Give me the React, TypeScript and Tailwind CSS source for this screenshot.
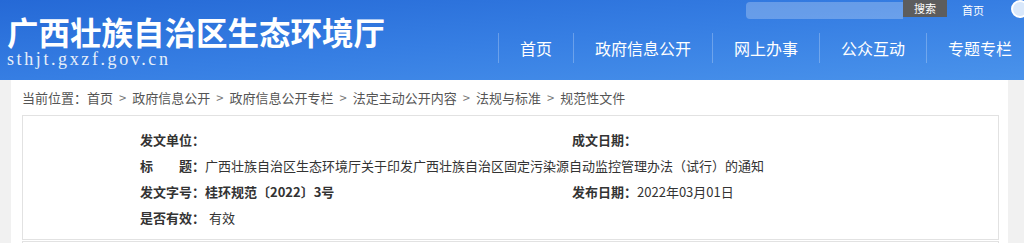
import React from "react";

const CJK = { fontFamily: '"Noto Sans CJK SC", "Noto Sans", sans-serif' };

const NAV = ["首页", "政府信息公开", "网上办事", "公众互动", "专题专栏"];

const CRUMBS = ["首页", "政府信息公开", "政府信息公开专栏", "法定主动公开内容", "法规与标准", "规范性文件"];

function Label({ children }: { children: React.ReactNode }) {
  return <span className="font-bold text-[#333]">{children}</span>;
}

export default function App() {
  return (
    <div className="w-[1024px] h-[243px] overflow-hidden bg-[#f1f1f1]" style={CJK}>
      {/* header */}
      <header className="relative h-[80px] flex overflow-hidden bg-gradient-to-br from-[#2569d6] via-[#367ee3] to-[#4a93eb]">
        <div className="w-[498px] shrink-0 pl-[7px] pt-[16px]">
          <h1 className="text-[31.5px] leading-[30px] font-bold text-white whitespace-nowrap">
            广西壮族自治区生态环境厅
          </h1>
          <div
            className="mt-[3px] text-[18px] leading-[20px] tracking-[2.6px] text-[#e6eef9]"
            style={{ fontFamily: '"Liberation Serif", "DejaVu Serif", serif' }}
          >
            sthjt.gxzf.gov.cn
          </div>
        </div>
        <div className="flex-1 min-w-0 flex flex-col">
          <div className="flex items-start h-[19px] pl-[248px]">
            <div className="shrink-0 mt-[2px] w-[157px] h-[17px] rounded-l-[4px] bg-white/25" />
            <button className="shrink-0 w-[44px] h-[17px] bg-[#5d5d5d] text-white text-[11px] leading-[17px]">
              搜索
            </button>
            <span className="shrink-0 ml-[15px] mt-[2px] text-[11px] leading-[16px] text-white whitespace-nowrap">
              首页
            </span>
            <span className="ml-[27px] shrink-0 w-[18px] h-[18px] rounded-full border-2 border-white bg-[#d9e8fb]" />
          </div>
          <nav className="mt-[14px] flex">
            {NAV.map((n) => (
              <a
                key={n}
                className="shrink-0 h-[30px] flex items-center px-[21px] border-l border-white/25 text-[16px] text-white whitespace-nowrap"
              >
                {n}
              </a>
            ))}
          </nav>
        </div>
      </header>

      {/* body */}
      <div className="flex h-[163px]">
        <div className="w-[11px] shrink-0" />
        <main className="w-[997px] shrink-0 bg-white pl-[11px] pr-[9px]">
          <div className="h-[35px] flex items-center text-[13px] text-[#555] whitespace-nowrap">
            <span>当前位置：</span>
            {CRUMBS.map((c, i) => (
              <React.Fragment key={c}>
                {i > 0 && <span className="mx-[6px] text-[#777]">&gt;</span>}
                <span>{c}</span>
              </React.Fragment>
            ))}
          </div>
          <div className="border border-[#e2e2e2] pl-[117px] pt-[11px] pb-[8px] text-[13px] text-[#333]">
            <div className="grid grid-cols-[432px_1fr]">
              <div className="h-[26px] flex items-center">
                <Label>发文单位：</Label>
              </div>
              <div className="h-[26px] flex items-center">
                <Label>成文日期：</Label>
              </div>
              <div className="col-span-2 h-[26px] flex items-center whitespace-nowrap">
                <span className="flex font-bold">
                  <span className="w-[52px] flex justify-between">
                    <span>标</span>
                    <span>题</span>
                  </span>
                  <span>：</span>
                </span>
                <span>广西壮族自治区生态环境厅关于印发广西壮族自治区固定污染源自动监控管理办法（试行）的通知</span>
              </div>
              <div className="h-[26px] flex items-center">
                <Label>发文字号：桂环规范〔2022〕3号</Label>
              </div>
              <div className="h-[26px] flex items-center">
                <Label>发布日期：</Label>
                <span>2022年03月01日</span>
              </div>
              <div className="h-[26px] flex items-center">
                <Label>是否有效：</Label>
                <span className="ml-[4px]">有效</span>
              </div>
            </div>
          </div>
          <div className="mt-px h-[20px] border border-[#e2e2e2]" />
        </main>
      </div>
    </div>
  );
}
